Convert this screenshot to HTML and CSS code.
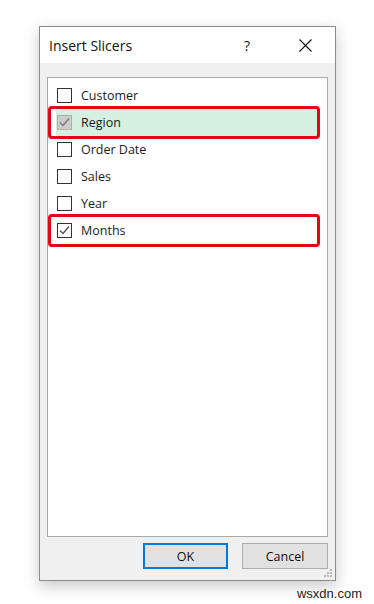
FILE: index.html
```html
<!DOCTYPE html>
<html lang="en">
<head>
    <meta charset="UTF-8">
    <meta name="viewport" content="width=device-width, initial-scale=1.0">
    <title>Insert Slicers</title>
    <link rel="stylesheet" href="styles.css">
</head>
<body>
    <div class="dialog">
        <div class="title-bar">
            <span class="title">Insert Slicers</span>
            <span class="help">?</span>
            <svg class="close" width="13" height="13" viewBox="0 0 13 13">
                <path d="M0.5 0.5 L12.5 12.5 M12.5 0.5 L0.5 12.5" stroke="#111" stroke-width="1.1" fill="none"/>
            </svg>
        </div>
        <div class="dialog-body">
            <div class="field-list">
                <div class="field-row">
                    <span class="check"></span>
                    <span class="label">Customer</span>
                </div>
                <div class="field-row selected marked">
                    <span class="check checked disabled">
                        <svg width="13" height="13" viewBox="0 0 13 13"><path d="M2 6.5 L5 9.5 L11 2.5" stroke="#7a7a7a" stroke-width="1.4" fill="none"/></svg>
                    </span>
                    <span class="label">Region</span>
                </div>
                <div class="field-row">
                    <span class="check"></span>
                    <span class="label">Order Date</span>
                </div>
                <div class="field-row">
                    <span class="check"></span>
                    <span class="label">Sales</span>
                </div>
                <div class="field-row">
                    <span class="check"></span>
                    <span class="label">Year</span>
                </div>
                <div class="field-row marked">
                    <span class="check checked">
                        <svg width="13" height="13" viewBox="0 0 13 13"><path d="M2 6.5 L5 9.5 L11 2.5" stroke="#555" stroke-width="1.4" fill="none"/></svg>
                    </span>
                    <span class="label">Months</span>
                </div>
            </div>
            <div class="button-bar">
                <button class="btn btn-default">OK</button>
                <button class="btn">Cancel</button>
            </div>
            <div class="grip">
                <span></span><span></span><span></span>
                <span></span><span></span><span></span>
            </div>
        </div>
    </div>
    <div class="watermark">wsxdn.com</div>
</body>
</html>
```

FILE: styles.css
```css
html, body { margin: 0; padding: 0; background: #fff; }
body { font-family: 'Open Sans', 'Noto Sans', sans-serif; color: #1a1a1a; }

.dialog { width: 297px; height: 555px; margin: 26px 0 0 39px; box-sizing: border-box; border: 1px solid #8c8c8c; background: #f0f0f0; box-shadow: 0 5px 14px rgba(0, 0, 0, 0.22); display: flex; flex-direction: column; }

.title-bar { height: 36px; background: #fff; display: flex; align-items: center; padding-left: 9px; }
.title { font-size: 14px; flex: 1; color: #111; }
.help { font-size: 14px; color: #111; margin-right: 49px; }
.close { margin-right: 23px; }

.dialog-body { flex: 1; display: flex; flex-direction: column; padding: 14px 7px 11px 7px; position: relative; }

.field-list { height: 460px; box-sizing: border-box; border: 1px solid #a9a9a9; background: #fff; padding: 4px 10px 0 8px; }

.field-row { height: 27px; display: flex; align-items: center; position: relative; }
.field-row.selected { background: #d5efe0; }
.field-row.marked::after { content: ""; position: absolute; left: -8px; right: -3px; top: -3px; bottom: -3px; border: 3.5px solid #e30613; border-radius: 4px; }

.check { width: 15px; height: 15px; box-sizing: border-box; border: 1px solid #333; background: #fff; margin-left: 1px; display: flex; align-items: center; justify-content: center; }
.check.disabled { background: #cccccc; border-color: #b0b0b0; }
.label { font-size: 12.5px; margin-left: 9px; color: #1a1a1a; }

.button-bar { display: flex; justify-content: flex-end; gap: 14px; margin-top: 6px; padding-right: 0; }
.btn { width: 86px; height: 26px; box-sizing: border-box; border: 1px solid #adadad; background: #e1e1e1; font-family: 'Open Sans', 'Noto Sans', sans-serif; font-size: 12.5px; color: #111; padding: 0; }
.btn-default { width: 85px; border: 2px solid #0078d7; }

.grip { position: absolute; right: 2px; bottom: 2px; width: 9px; height: 9px; display: grid; grid-template-columns: repeat(3, 2px); grid-template-rows: repeat(3, 2px); gap: 1px; }
.grip span { background: #b9b9b9; }
.grip span:nth-child(1) { grid-column: 3; grid-row: 1; }
.grip span:nth-child(2) { grid-column: 2; grid-row: 2; }
.grip span:nth-child(3) { grid-column: 3; grid-row: 2; }
.grip span:nth-child(4) { grid-column: 1; grid-row: 3; }
.grip span:nth-child(5) { grid-column: 2; grid-row: 3; }
.grip span:nth-child(6) { grid-column: 3; grid-row: 3; }

.watermark { text-align: right; margin: 5px 12px 0 0; font-family: 'Liberation Sans', Arial, sans-serif; font-size: 13px; color: #222; }
```
